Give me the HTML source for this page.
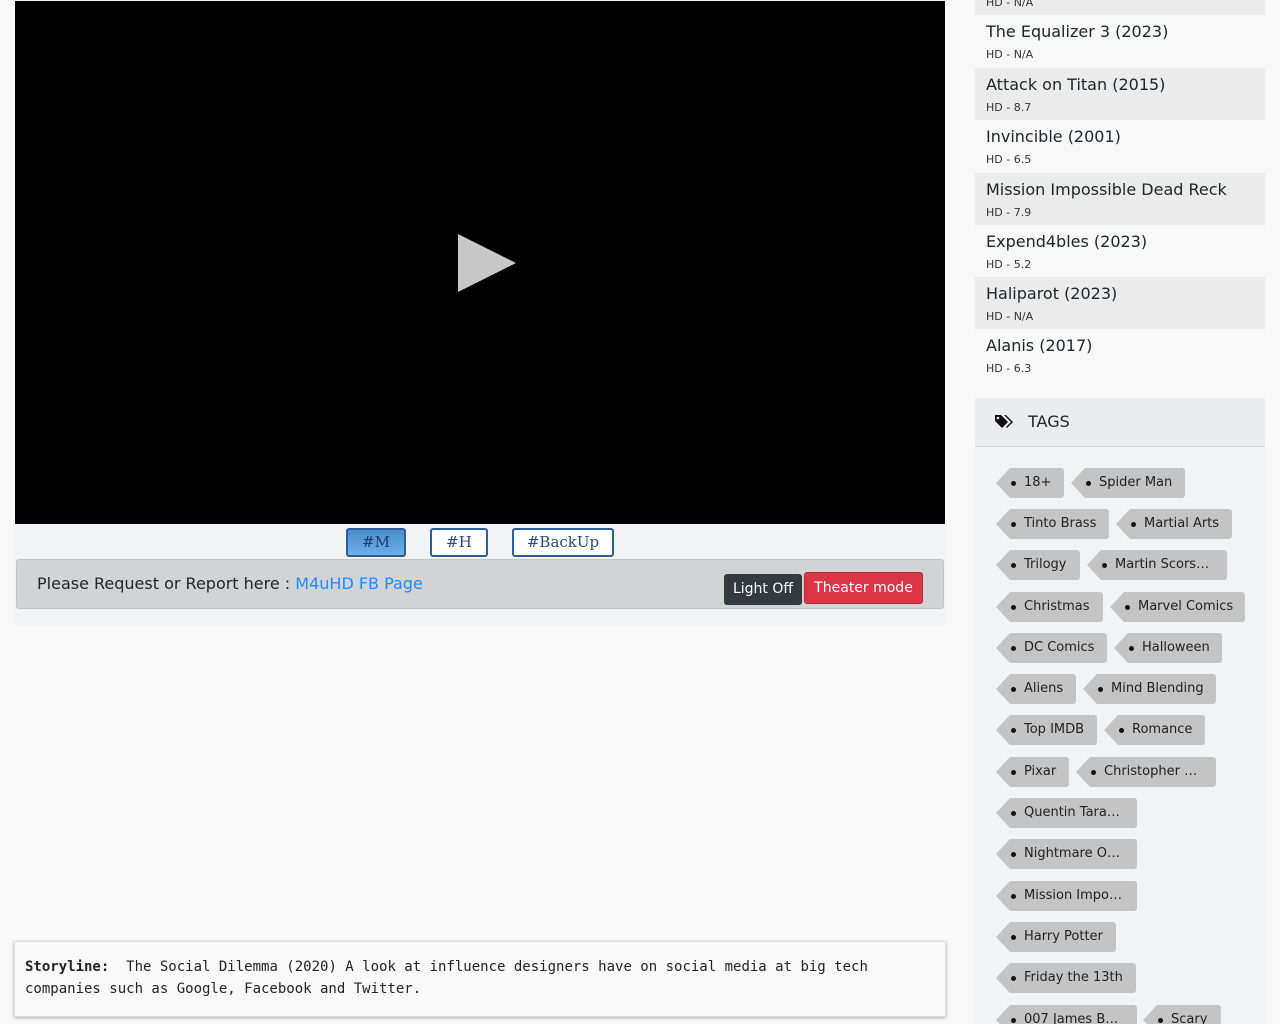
<!DOCTYPE html>
<html><head><meta charset="utf-8"><style>
*{box-sizing:border-box;margin:0;padding:0}
html,body{width:1280px;height:1024px;overflow:hidden}
body{background:#f8f8f8;font-family:"DejaVu Sans","Liberation Sans",sans-serif;position:relative;color:#212529}
.abs{position:absolute}
.video{left:15px;top:1px;width:930px;height:523px;background:#000}
.btnrow{left:15px;top:524px;width:930px;height:102px;background:#f2f3f5}
.sb{position:absolute;top:4px;height:29px;border:2px solid #2f5d9a;border-radius:3px;background:#fff;font-family:"DejaVu Serif","Liberation Serif",serif;font-size:15px;color:#2a4a7a;text-align:center;line-height:25px}
.bar{left:16px;top:559px;width:928px;height:50px;background:#d2d3d5;border:1px solid #c2c3c5;border-radius:3px}
.li{position:absolute;left:975px;width:290px;height:52.5px;padding-left:11px}
.li .t{font-size:16px;padding-top:7px;line-height:20px}
.li .s{font-size:11px;margin-top:6px;color:#333}
.g{background:#ebebeb}.w{background:#f8f8f8}
.tag{position:absolute;height:30px;margin-top:1px;background:#c4c4c4;clip-path:polygon(0 50%,14px 0,100% 0,100% 100%,14px 100%);border-radius:0 3px 3px 0;font-size:13px;line-height:30px;padding-left:28px;white-space:nowrap;overflow:hidden;color:#222}
.tag:before{content:"";position:absolute;left:15px;top:13px;width:5px;height:5px;border-radius:50%;background:#111}
</style></head><body>
<div class="abs video"></div>
<svg class="abs" style="left:0;top:0" width="1280" height="530"><polygon points="458,234 516,263 458,292" fill="#c8c8c8"/></svg>
<div class="abs btnrow">
<div class="sb" style="left:331px;width:60px;background:linear-gradient(#4a8ed0,#6bb0e8);color:#1d3c66">#M</div>
<div class="sb" style="left:415px;width:58px">#H</div>
<div class="sb" style="left:497px;width:102px">#BackUp</div>
</div>
<div class="abs bar">
<div class="abs" style="left:20px;top:14px;font-size:16px">Please Request or Report here : <span style="color:#1a8cff">M4uHD FB Page</span></div>
<div class="abs" style="left:707px;top:14px;width:78px;height:31px;background:#343a40;color:#fff;font-size:14px;line-height:31px;text-align:center;border-radius:3px">Light Off</div>
<div class="abs" style="left:787px;top:12px;width:119px;height:32px;background:#dc3545;color:#fff;font-size:14px;line-height:31px;text-align:center;border-radius:3px;border:1px solid #b02a37">Theater mode</div>
</div>
<div class="abs" style="left:14px;top:941px;width:932px;height:76px;background:#f9f9f9;border:1px solid #ddd;box-shadow:0 1px 3px rgba(0,0,0,.3);padding:14px 10px;font-family:'DejaVu Sans Mono','Liberation Mono',monospace;font-size:14px;line-height:22px;color:#222"><b>Storyline:</b>&nbsp; The Social Dilemma (2020) A look at influence designers have on social media at big tech companies such as Google, Facebook and Twitter.</div>

<div class="li g" style="top:-37px"><div class="t">&nbsp;</div><div class="s">HD - N/A</div></div>
<div class="li w" style="top:15px"><div class="t">The Equalizer 3 (2023)</div><div class="s">HD - N/A</div></div>
<div class="li g" style="top:67.5px"><div class="t">Attack on Titan (2015)</div><div class="s">HD - 8.7</div></div>
<div class="li w" style="top:120px"><div class="t">Invincible (2001)</div><div class="s">HD - 6.5</div></div>
<div class="li g" style="top:172.5px"><div class="t">Mission Impossible Dead Reck</div><div class="s">HD - 7.9</div></div>
<div class="li w" style="top:225px"><div class="t">Expend4bles (2023)</div><div class="s">HD - 5.2</div></div>
<div class="li g" style="top:277px"><div class="t">Haliparot (2023)</div><div class="s">HD - N/A</div></div>
<div class="li w" style="top:329px"><div class="t">Alanis (2017)</div><div class="s">HD - 6.3</div></div>

<div class="abs" style="left:975px;top:398px;width:290px;height:630px;background:#f2f3f5"></div>
<div class="abs" style="left:975px;top:398px;width:290px;height:49px;background:#ebeced;border-bottom:1px solid #d0d0d0"></div>
<svg class="abs" style="left:995px;top:414px" width="19" height="16" viewBox="0 0 19 16"><path d="M0 1v6l7 7 6-6-7-7z" fill="#111"/><circle cx="3" cy="4" r="1.3" fill="#ebeced"/><path d="M9 1h2l7 7-6 6-1-1 5-5z" fill="#111"/></svg>
<div class="abs" style="left:1028px;top:412px;font-size:16px">TAGS</div>

<div class="tag" style="left:996px;top:467px;width:68px">18+</div>
<div class="tag" style="left:1071px;top:467px;width:114px">Spider Man</div>
<div class="tag" style="left:996px;top:508px;width:113px">Tinto Brass</div>
<div class="tag" style="left:1116px;top:508px;width:116px">Martial Arts</div>
<div class="tag" style="left:996px;top:549px;width:84px">Trilogy</div>
<div class="tag" style="left:1087px;top:549px;width:140px">Martin Scors…</div>
<div class="tag" style="left:996px;top:591px;width:107px">Christmas</div>
<div class="tag" style="left:1110px;top:591px;width:135px">Marvel Comics</div>
<div class="tag" style="left:996px;top:632px;width:111px">DC Comics</div>
<div class="tag" style="left:1114px;top:632px;width:108px">Halloween</div>
<div class="tag" style="left:996px;top:673px;width:80px">Aliens</div>
<div class="tag" style="left:1083px;top:673px;width:133px">Mind Blending</div>
<div class="tag" style="left:996px;top:714px;width:101px">Top IMDB</div>
<div class="tag" style="left:1104px;top:714px;width:101px">Romance</div>
<div class="tag" style="left:996px;top:756px;width:73px">Pixar</div>
<div class="tag" style="left:1076px;top:756px;width:140px">Christopher …</div>
<div class="tag" style="left:996px;top:797px;width:141px">Quentin Tara…</div>
<div class="tag" style="left:996px;top:838px;width:141px">Nightmare O…</div>
<div class="tag" style="left:996px;top:880px;width:141px">Mission Impo…</div>
<div class="tag" style="left:996px;top:921px;width:120px">Harry Potter</div>
<div class="tag" style="left:996px;top:962px;width:140px">Friday the 13th</div>
<div class="tag" style="left:996px;top:1004px;width:141px">007 James B…</div>
<div class="tag" style="left:1143px;top:1004px;width:78px">Scary</div>
</body></html>
